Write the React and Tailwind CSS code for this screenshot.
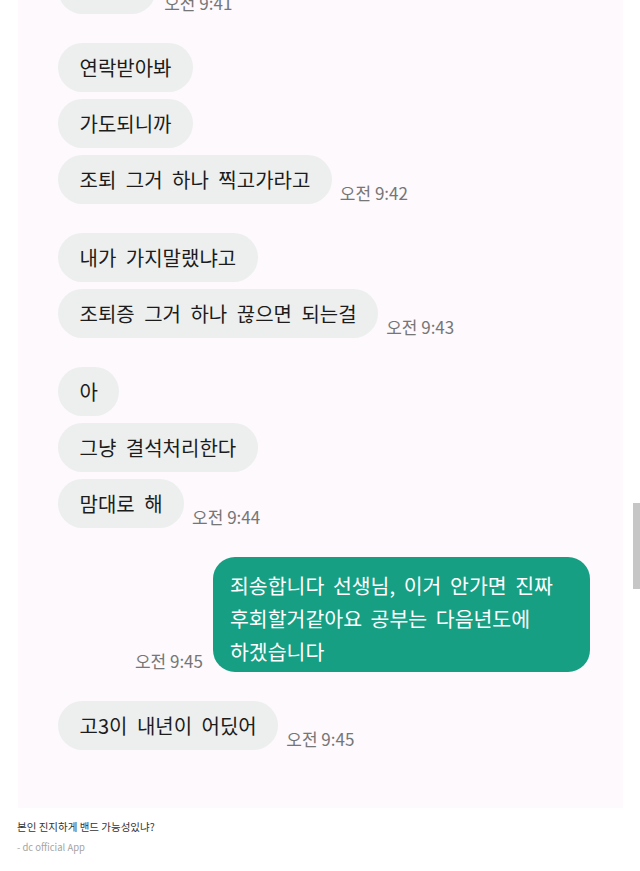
import React from 'react';

// 대화 내용 (상대 메시지는 회색, 내 메시지는 초록색)
const groups = [
    { msgs: ['누구야'], time: '오전 9:41' },
    { msgs: ['연락받아봐', '가도되니까', '조퇴 그거 하나 찍고가라고'], time: '오전 9:42' },
    { msgs: ['내가 가지말랬냐고', '조퇴증 그거 하나 끊으면 되는걸'], time: '오전 9:43' },
    { msgs: ['아', '그냥 결석처리한다', '맘대로 해'], time: '오전 9:44' },
    {
        mine: true,
        lines: ['죄송합니다 선생님, 이거 안가면 진짜', '후회할거같아요 공부는 다음년도에', '하겠습니다'],
        time: '오전 9:45',
    },
    { msgs: ['고3이 내년이 어딨어'], time: '오전 9:45' },
];

const Time = ({ children }) => (
    <span className="mb-[3px] shrink-0 text-[17px] leading-none text-[#767676]">{children}</span>
);

function Received({ msgs, time }) {
    return (
        <div className="flex flex-col gap-[7px]">
            {msgs.map((m, i) => (
                <div key={i} className="flex items-end gap-2">
                    <div className="flex h-[49px] items-center rounded-full bg-[#edefee] px-[21.5px] text-[20px] text-[#1c1c1c] [word-spacing:5px] whitespace-nowrap">
                        {m}
                    </div>
                    {i === msgs.length - 1 && <Time>{time}</Time>}
                </div>
            ))}
        </div>
    );
}

function Sent({ lines, time }) {
    return (
        <div className="flex items-end justify-end gap-[10px] pr-[33px]">
            <Time>{time}</Time>
            <div className="w-[377px] rounded-[22px] bg-[#179f84] pl-[17px] pr-3 pt-3 pb-1 text-[20.5px] leading-[33px] text-white [word-spacing:4px]">
                {lines.map((l, i) => (
                    <div key={i} className="whitespace-nowrap">{l}</div>
                ))}
            </div>
        </div>
    );
}

export default function App() {
    return (
        <div className="relative h-[871px] w-full overflow-hidden bg-white font-['Noto_Sans_CJK_KR',sans-serif]">
            {/* 캡처 이미지 영역 */}
            <div className="ml-[18px] h-[808px] w-[605px] overflow-hidden bg-[#fdf9fd]">
                <div className="mt-[-35px] flex flex-col gap-[29px] pl-[40px]">
                    {groups.map((g, i) =>
                        g.mine ? <Sent key={i} lines={g.lines} time={g.time} /> : <Received key={i} msgs={g.msgs} time={g.time} />
                    )}
                </div>
            </div>

            {/* 본문 */}
            <div className="px-[17px] pt-[12px]">
                <p className="text-[10.5px] leading-[14px] text-[#333]">본인 진지하게 밴드 가능성있냐?</p>
                <p className="mt-[7px] text-[9.5px] leading-[12px] text-[#a5a5a5]">- dc official App</p>
            </div>

            {/* 스크롤바 */}
            <div className="absolute right-0 top-[503px] h-[86px] w-[7px] bg-[#c6c6c6]" />
        </div>
    );
}
